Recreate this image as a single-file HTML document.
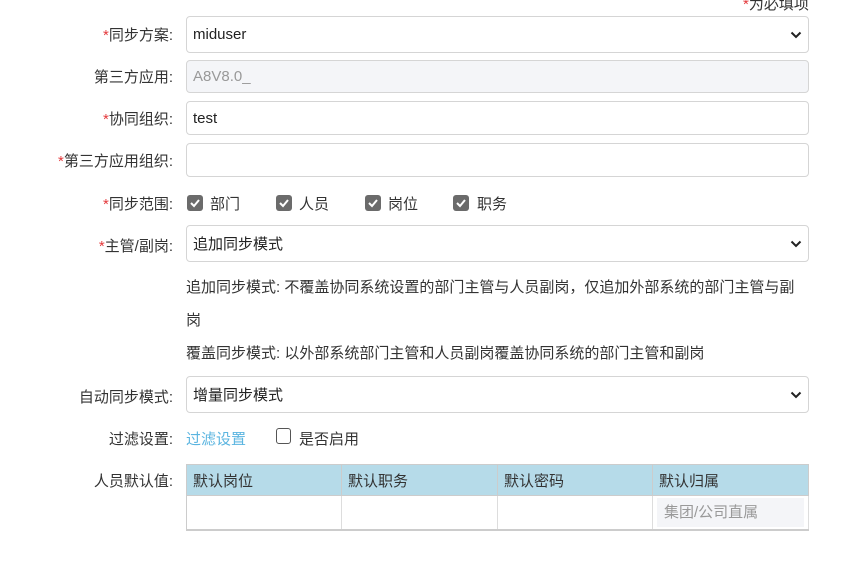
<!DOCTYPE html>
<html><head><meta charset="utf-8"><style>
*{box-sizing:border-box;margin:0;padding:0}
body{width:848px;height:581px;background:#fff;font-family:"Liberation Sans","Noto Sans CJK SC",sans-serif;font-size:15px;color:#333;position:relative;overflow:hidden}
.a{position:absolute}
.lbl{position:absolute;right:675px;width:170px;text-align:right;color:#333;white-space:nowrap}
.r{color:#e4393c}
.inp{position:absolute;left:186px;width:623px;border:1px solid #d5d5d5;border-radius:4px;background:#fff;padding-left:6px;color:#222;display:flex;align-items:center}
.dis{background:#f4f5f8;color:#999}
.car{position:absolute;right:6px;top:50%;margin-top:-4px}
.cb{position:absolute;top:195px;width:16px;height:16px;background:#6b6b6b;border-radius:3px}
.cb svg{position:absolute;left:1px;top:1px}
table{border-collapse:collapse;position:absolute;left:186px;top:464px;width:623px;border:1px solid #ccc;border-bottom:2px solid #ccc}
th{background:#b6dbe9;font-weight:normal;text-align:left;height:31px;padding-left:6px;border-right:1px solid #ccc;color:#333}
td{height:33px;border-right:1px solid #ddd;border-top:1px solid #ccc}
</style></head><body>
<div class="a" style="left:743px;top:-7px;color:#333"><span class="r">*</span>为必填项</div>

<div class="lbl" style="top:24px"><span class="r">*</span>同步方案:</div>
<div class="inp" style="top:16px;height:37px">miduser<svg class="car" width="12" height="8" viewBox="0 0 12 8"><path d="M1.5 1.5L6 6l4.5-4.5" stroke="#222" stroke-width="2" fill="none"/></svg></div>

<div class="lbl" style="top:66px">第三方应用:</div>
<div class="inp dis" style="top:60px;height:33px">A8V8.0_</div>

<div class="lbl" style="top:108px"><span class="r">*</span>协同组织:</div>
<div class="inp" style="top:101px;height:34px">test</div>

<div class="lbl" style="top:150px"><span class="r">*</span>第三方应用组织:</div>
<div class="inp" style="top:143px;height:34px"></div>

<div class="lbl" style="top:193px"><span class="r">*</span>同步范围:</div>
<span class="cb" style="left:187px"><svg width="14" height="14" viewBox="0 0 14 14"><path d="M3 7l3 3L11 4" stroke="#fff" stroke-width="2" fill="none"/></svg></span><div class="a" style="left:210px;top:193px">部门</div>
<span class="cb" style="left:276px"><svg width="14" height="14" viewBox="0 0 14 14"><path d="M3 7l3 3L11 4" stroke="#fff" stroke-width="2" fill="none"/></svg></span><div class="a" style="left:299px;top:193px">人员</div>
<span class="cb" style="left:365px"><svg width="14" height="14" viewBox="0 0 14 14"><path d="M3 7l3 3L11 4" stroke="#fff" stroke-width="2" fill="none"/></svg></span><div class="a" style="left:388px;top:193px">岗位</div>
<span class="cb" style="left:453px"><svg width="14" height="14" viewBox="0 0 14 14"><path d="M3 7l3 3L11 4" stroke="#fff" stroke-width="2" fill="none"/></svg></span><div class="a" style="left:477px;top:193px">职务</div>

<div class="lbl" style="top:235px"><span class="r">*</span>主管/副岗:</div>
<div class="inp" style="top:225px;height:37px">追加同步模式<svg class="car" width="12" height="8" viewBox="0 0 12 8"><path d="M1.5 1.5L6 6l4.5-4.5" stroke="#222" stroke-width="2" fill="none"/></svg></div>

<div class="a" style="left:186px;top:271px;width:622px;line-height:33px;color:#333">追加同步模式: 不覆盖协同系统设置的部门主管与人员副岗，仅追加外部系统的部门主管与副岗</div>
<div class="a" style="left:186px;top:342px;color:#333">覆盖同步模式: 以外部系统部门主管和人员副岗覆盖协同系统的部门主管和副岗</div>

<div class="lbl" style="top:386px">自动同步模式:</div>
<div class="inp" style="top:376px;height:37px">增量同步模式<svg class="car" width="12" height="8" viewBox="0 0 12 8"><path d="M1.5 1.5L6 6l4.5-4.5" stroke="#222" stroke-width="2" fill="none"/></svg></div>

<div class="lbl" style="top:428px">过滤设置:</div>
<div class="a" style="left:186px;top:428px;color:#5bb5e0">过滤设置</div>
<div class="a" style="left:276px;top:428px;width:15px;height:16px;border:1px solid #555;border-radius:3px"></div>
<div class="a" style="left:299px;top:428px">是否启用</div>

<div class="lbl" style="top:470px">人员默认值:</div>
<table><tr><th style="width:155px">默认岗位</th><th style="width:156px">默认职务</th><th style="width:155px">默认密码</th><th>默认归属</th></tr>
<tr><td></td><td></td><td></td><td style="padding:2px 4px"><div style="background:#f4f5f8;color:#999;height:29px;line-height:29px;padding-left:7px">集团/公司直属</div></td></tr></table>
</body></html>
